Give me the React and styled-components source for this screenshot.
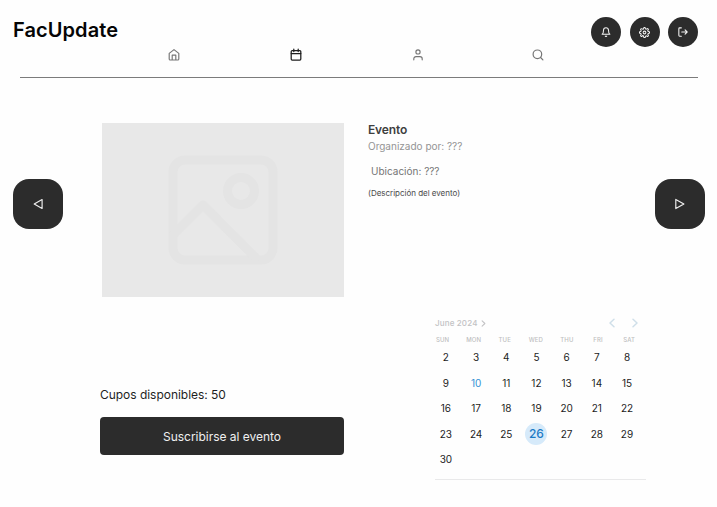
import React from "react";
import styled, { createGlobalStyle, css } from "styled-components";

const GlobalStyle = createGlobalStyle`
  *, *::before, *::after { box-sizing: border-box; }
  body { margin: 0; background: #fefefe; font-family: Inter, "Liberation Sans", sans-serif; }
  button { font: inherit; border: 0; padding: 0; cursor: pointer; }
  svg { display: block; }
  h1, h2, p { margin: 0; }
`;

const Page = styled.div`
  width: 717px;
  height: 507px;
  overflow: hidden;
  background: #fefefe;
`;

const Header = styled.header`
  height: 78px;
`;

const TopBar = styled.div`
  display: flex;
  justify-content: space-between;
  height: 47.5px;
  padding: 17px 19px 0 13px;
`;

const Brand = styled.h1`
  font-size: 20px;
  line-height: 26px;
  font-weight: 600;
  letter-spacing: 0.08px;
  color: #050505;
`;

const Actions = styled.div`
  display: flex;
  gap: 8.5px;
  padding-top: 0.4px;
`;

const RoundButton = styled.button`
  display: grid;
  place-items: center;
  width: 30px;
  height: 30px;
  border-radius: 50%;
  color: #f3f3f3;
  background: #2c2c2c;
`;

const Nav = styled.nav`
  display: grid;
  grid-template-columns: 122px 122px 121px 120px;
  justify-items: center;
  height: 29.5px;
  margin-left: 113.4px;
  color: #757575;
`;

const NavItem = styled.a`
  width: 14px;
  height: 14px;
  color: ${(p) => (p.$active ? "#1e1e1e" : "inherit")};
`;

const Rule = styled.hr`
  height: 1px;
  margin: 0 19px 0 20px;
  border: 0;
  background: #7b7b7b;
`;

const Main = styled.main`
  display: flex;
  align-items: flex-start;
  padding: 0 12px 0 13.4px;
`;

const ArrowButton = styled.button`
  display: grid;
  place-items: center;
  flex: none;
  width: 50px;
  height: 50px;
  margin-top: 101px;
  border-radius: 16px;
  color: #f0f0f0;
  background: #2c2c2c;
`;

const Booking = styled.section`
  flex: none;
  width: 244px;
  margin: 45px 0 0 36.6px;
`;

const Cover = styled.div`
  display: grid;
  place-items: center;
  width: 242px;
  height: 174px;
  margin-left: 2px;
  background: #e8e8e8;
  color: #e4e4e4;
`;

const Seats = styled.p`
  margin-top: 89.5px;
  font-size: 12px;
  line-height: 16px;
  letter-spacing: -0.03px;
  color: #1e1e1e;
`;

const Subscribe = styled.button`
  display: block;
  width: 244px;
  height: 38.4px;
  margin-top: 14.5px;
  border-radius: 4px;
  font-size: 12px;
  letter-spacing: -0.03px;
  color: #f0f0f0;
  background: #2c2c2c;
`;

const Details = styled.section`
  flex: 1;
  margin: 45px 0 0 24px;
`;

const EventTitle = styled.h2`
  font-size: 12px;
  line-height: 14px;
  font-weight: 600;
  letter-spacing: -0.15px;
  color: #3f3f3f;
`;

const Meta = styled.p`
  font-size: 10px;
  line-height: 14px;
  color: ${(p) => (p.$muted ? "#949494" : "#757575")};
  ${(p) =>
    p.$muted
      ? css`margin-top: 2px;`
      : css`margin: 11px 0 0 3px;`}
`;

const Description = styled.p`
  margin-top: 9px;
  font-size: 8px;
  line-height: 12px;
  letter-spacing: -0.02px;
  color: #4a4a4a;
`;

const Calendar = styled.section`
  width: 211px;
  height: 164px;
  margin: 117px 0 0 67px;
  border-bottom: 1px solid #e9e9ea;
`;

const CalendarHeader = styled.div`
  display: flex;
  align-items: center;
  height: 14px;
  padding-right: 6px;
  color: #c2c2c4;
`;

const Month = styled.span`
  font-size: 8px;
  font-weight: 500;
  letter-spacing: 0.15px;
  margin-right: 2px;
`;

const MonthArrows = styled.span`
  display: flex;
  gap: 13px;
  margin-left: auto;
  color: #cfdfe9;
`;

const Weekdays = styled.div`
  display: grid;
  grid-template-columns: repeat(7, 31.1px);
  width: 218px;
  height: 14px;
  margin: 2px 0 0 -8px;
  font-size: 6px;
  line-height: 16px;
  font-weight: 500;
  letter-spacing: 0.1px;
  text-align: center;
  color: #bfbfc1;
`;

const Days = styled.div`
  display: grid;
  grid-template-columns: repeat(7, 30.2px);
  grid-auto-rows: 25.5px;
  place-items: center;
  margin: -1.4px 0 0 -4.2px;
`;

const Day = styled.span`
  display: grid;
  place-items: center;
  width: 22px;
  height: 22px;
  border-radius: 50%;
  font-size: 10px;
  color: ${(p) => (p.$today ? "#3391d4" : "#1c1c1c")};
  ${(p) =>
    p.$selected &&
    css`
      font-size: 12px;
      font-weight: 500;
      color: #1c7ac6;
      background: #d6eafa;
    `}
`;

const Icon = ({ size = 14, width = 1.2, box = 14, children }) => (
  <svg width={size} height={size} viewBox={`0 0 ${box} ${box}`} fill="none" stroke="currentColor"
    strokeWidth={width} strokeLinecap="round" strokeLinejoin="round" aria-hidden="true">
    {children}
  </svg>
);

const HomeIcon = () => (
  <Icon width={1.15}>
    <path d="M2.2 5.4 7 1.6l4.8 3.8v5.5a1.1 1.1 0 0 1-1.1 1.1H3.3a1.1 1.1 0 0 1-1.1-1.1zM5.2 12V7.1h3.6V12" />
  </Icon>
);
const CalendarIcon = () => (
  <Icon width={1.25}>
    <rect x="2.2" y="2.6" width="9.6" height="9.4" rx="1" />
    <path d="M2.2 5.5h9.6M4.8 1.2v2.3M9.2 1.2v2.3" />
  </Icon>
);
const UserIcon = () => (
  <Icon width={1.15}>
    <circle cx="7" cy="3.9" r="2.1" />
    <path d="M2.8 11.8v-1a2.2 2.2 0 0 1 2.2-2.2h4a2.2 2.2 0 0 1 2.2 2.2v1" />
  </Icon>
);
const SearchIcon = () => (
  <Icon width={1.2}>
    <circle cx="6.4" cy="6.3" r="4.3" />
    <path d="m9.6 9.5 2.3 2.3" />
  </Icon>
);
const BellIcon = () => (
  <Icon size={10} box={22} width={2.3}>
    <path d="M16.5 7a5.5 5.5 0 0 0-11 0c0 7-3 9-3 9h17s-3-2-3-9M12.7 20a2 2 0 0 1-3.4 0" />
  </Icon>
);
const GearIcon = () => (
  <Icon size={11} box={24} width={2.2}>
    <circle cx="12" cy="12" r="3" />
    <path d="M19.4 15a1.65 1.65 0 0 0 .33 1.82l.06.06a2 2 0 0 1-2.83 2.83l-.06-.06a1.65 1.65 0 0 0-2.8 1.17V21a2 2 0 0 1-4 0v-.09A1.65 1.65 0 0 0 7.1 19.65l-.06.06a2 2 0 0 1-2.83-2.83l.06-.06A1.65 1.65 0 0 0 3.09 14H3a2 2 0 0 1 0-4h.09A1.65 1.65 0 0 0 4.27 7.18l-.06-.06a2 2 0 0 1 2.83-2.83l.06.06A1.65 1.65 0 0 0 10 3.09V3a2 2 0 0 1 4 0v.09a1.65 1.65 0 0 0 2.8 1.17l.06-.06a2 2 0 0 1 2.83 2.83l-.06.06A1.65 1.65 0 0 0 20.91 10H21a2 2 0 0 1 0 4h-.09a1.65 1.65 0 0 0-1.51 1z" />
  </Icon>
);
const ExitIcon = () => (
  <Icon size={10} box={24} width={2.6}>
    <path d="M8 22H4a2 2 0 0 1-2-2V4a2 2 0 0 1 2-2h4M17 17l5-5-5-5M22 12H9" />
  </Icon>
);
const Triangle = ({ left }) => (
  <Icon width={1.15}>
    <path d={left ? "M11.1 2.6v8.8L3.2 7z" : "M2.8 2.4v9.2L10.9 7z"} />
  </Icon>
);

const ImageIcon = () => (
  <Icon size={112} box={112} width={9}>
    <rect x="6" y="6" width="100" height="100" rx="12" />
    <circle cx="74" cy="37" r="13.5" />
    <path d="M7 80 36 51l52 52" />
  </Icon>
);

const Chevron = ({ left, size = 10 }) => (
  <Icon size={size} box={10} width={1.5}>
    <path d={left ? "M7 1.2 3 5l4 3.8" : "M3 1.2 7 5 3 8.8"} />
  </Icon>
);

const weekdays = ["SUN", "MON", "TUE", "WED", "THU", "FRI", "SAT"];
const days = Array.from({ length: 29 }, (_, i) => i + 2);

export default function App() {
  return (
    <Page>
      <GlobalStyle />
      <Header>
        <TopBar>
          <Brand>FacUpdate</Brand>
          <Actions>
            <RoundButton aria-label="Notificaciones"><BellIcon /></RoundButton>
            <RoundButton aria-label="Ajustes"><GearIcon /></RoundButton>
            <RoundButton aria-label="Salir"><ExitIcon /></RoundButton>
          </Actions>
        </TopBar>
        <Nav>
          <NavItem aria-label="Inicio"><HomeIcon /></NavItem>
          <NavItem aria-label="Eventos" $active><CalendarIcon /></NavItem>
          <NavItem aria-label="Perfil"><UserIcon /></NavItem>
          <NavItem aria-label="Buscar"><SearchIcon /></NavItem>
        </Nav>
        <Rule />
      </Header>
      <Main>
        <ArrowButton aria-label="Anterior"><Triangle left /></ArrowButton>
        <Booking>
          <Cover><ImageIcon /></Cover>
          <Seats>Cupos disponibles: 50</Seats>
          <Subscribe>Suscribirse al evento</Subscribe>
        </Booking>
        <Details>
          <EventTitle>Evento</EventTitle>
          <Meta $muted>Organizado por: ???</Meta>
          <Meta>Ubicación: ???</Meta>
          <Description>(Descripción del evento)</Description>
          <Calendar>
            <CalendarHeader>
              <Month>June 2024</Month>
              <Chevron size={7} />
              <MonthArrows><Chevron left /><Chevron /></MonthArrows>
            </CalendarHeader>
            <Weekdays>{weekdays.map((d) => <span key={d}>{d}</span>)}</Weekdays>
            <Days>
              {days.map((d) => (
                <Day key={d} $today={d === 10} $selected={d === 26}>{d}</Day>
              ))}
            </Days>
          </Calendar>
        </Details>
        <ArrowButton aria-label="Siguiente"><Triangle /></ArrowButton>
      </Main>
    </Page>
  );
}
